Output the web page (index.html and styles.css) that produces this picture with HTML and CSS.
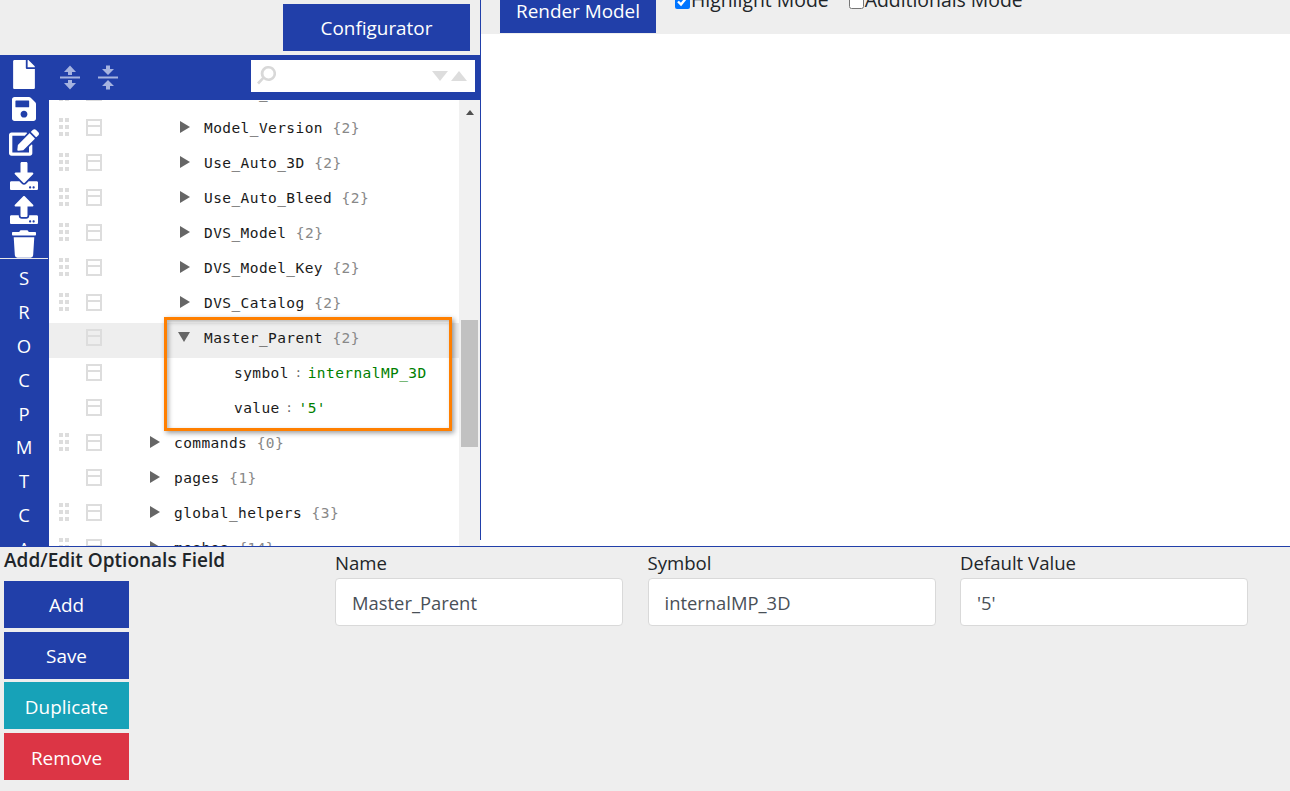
FILE: index.html
```html
<!DOCTYPE html>
<html lang="en">
<head>
<meta charset="utf-8">
<title>Configurator</title>
<link rel="stylesheet" href="styles.css">
</head>
<body>
<svg class="defs" width="0" height="0" aria-hidden="true">
  <symbol id="grip" viewBox="0 0 10 18"><path d="M0 0h4v4H0zM6 0h4v4H6zM0 7h4v4H0zM6 7h4v4H6zM0 14h4v4H0zM6 14h4v4H6z"/></symbol>
  <symbol id="box" viewBox="0 0 16 17"><path fill-rule="evenodd" d="M0 0h16v17H0zM2 2v4h12V2zM2 8v7h12V8z"/></symbol>
  <symbol id="tri" viewBox="0 0 10 12"><path d="M0 0l10 6-10 6z"/></symbol>
</svg>
<main class="page">
  <section class="workspace">
    <div class="left">
      <div class="left-top"><button class="btn btn-config">Configurator</button></div>
      <div class="editor">
        <nav class="rail">
          <div class="rail-icons">
            <span class="rail-item"><svg class="i-file" viewBox="0 0 384 512"><path d="M224 136V0H24C10.700 0 0 10.700 0 24v464c0 13.300 10.700 24 24 24h336c13.300 0 24-10.700 24-24V160H248c-13.200 0-24-10.800-24-24zm160-14.100v6.100H256V0h6.100c6.400 0 12.500 2.500 17 7l97.900 98c4.500 4.500 7 10.600 7 16.900z"/></svg></span>
            <span class="rail-item"><svg class="i-save" viewBox="0 0 448 512"><path d="M433.941 129.941l-83.882-83.882A48 48 0 0 0 316.118 32H48C21.490 32 0 53.490 0 80v352c0 26.510 21.490 48 48 48h352c26.510 0 48-21.490 48-48V163.882a48 48 0 0 0-14.059-33.941zM224 416c-35.346 0-64-28.654-64-64 0-35.346 28.654-64 64-64s64 28.654 64 64c0 35.346-28.654 64-64 64zm96-304.520V212c0 6.627-5.373 12-12 12H76c-6.627 0-12-5.373-12-12V108c0-6.627 5.373-12 12-12h228.520c3.183 0 6.235 1.264 8.485 3.515l3.480 3.480A11.996 11.996 0 0 1 320 111.480z"/></svg></span>
            <span class="rail-item"><svg class="i-edit" viewBox="0 0 576 512"><path d="M402.600 83.200l90.200 90.200c3.800 3.800 3.800 10 0 13.800L274.400 405.600l-92.800 10.300c-12.400 1.400-22.900-9.100-21.500-21.500l10.300-92.800L388.800 83.200c3.800-3.800 10-3.800 13.800 0zm162-22.900l-48.800-48.800c-15.200-15.200-39.900-15.200-55.200 0l-35.400 35.400c-3.800 3.800-3.800 10 0 13.800l90.200 90.200c3.800 3.800 10 3.800 13.800 0l35.400-35.400c15.200-15.300 15.200-40 0-55.200zM384 346.200V448H64V128h229.800c3.200 0 6.200-1.300 8.500-3.500l40-40c7.600-7.600 2.200-20.500-8.500-20.500H48C21.500 64 0 85.500 0 112v352c0 26.500 21.500 48 48 48h352c26.500 0 48-21.500 48-48V306.200c0-10.700-12.900-16-20.500-8.500l-40 40c-2.200 2.300-3.500 5.300-3.500 8.500z"/></svg></span>
            <span class="rail-item"><svg class="i-load" viewBox="0 0 512 512"><path d="M216 0h80c13.300 0 24 10.700 24 24v168h87.700c17.800 0 26.700 21.500 14.100 34.100L269.700 378.300c-7.500 7.500-19.800 7.500-27.300 0L90.100 226.100c-12.600-12.600-3.700-34.100 14.100-34.100H192V24c0-13.300 10.700-24 24-24zm296 376v112c0 13.300-10.700 24-24 24H24c-13.300 0-24-10.700-24-24V376c0-13.300 10.700-24 24-24h146.700l49 49c20.100 20.100 52.500 20.100 72.600 0l49-49H488c13.300 0 24 10.700 24 24zm-124 88c0-11-9-20-20-20s-20 9-20 20 9 20 20 20 20-9 20-20zm64 0c0-11-9-20-20-20s-20 9-20 20 9 20 20 20 20-9 20-20z"/></svg></span>
            <span class="rail-item"><svg class="i-load" viewBox="0 0 512 512"><path d="M296 384h-80c-13.300 0-24-10.700-24-24V192h-87.700c-17.800 0-26.700-21.500-14.100-34.100L242.300 5.700c7.500-7.500 19.800-7.500 27.300 0l152.200 152.200c12.600 12.600 3.700 34.100-14.100 34.100H320v168c0 13.300-10.700 24-24 24zm216-8v112c0 13.300-10.700 24-24 24H24c-13.300 0-24-10.700-24-24V376c0-13.300 10.700-24 24-24h136v8c0 30.900 25.100 56 56 56h80c30.900 0 56-25.100 56-56v-8h136c13.300 0 24 10.700 24 24zm-124 88c0-11-9-20-20-20s-20 9-20 20 9 20 20 20 20-9 20-20zm64 0c0-11-9-20-20-20s-20 9-20 20 9 20 20 20 20-9 20-20z"/></svg></span>
            <span class="rail-item"><svg class="i-save" viewBox="0 0 448 512"><path d="M432 32H312l-9.400-18.700A24 24 0 0 0 281.100 0H166.800a23.720 23.720 0 0 0-21.400 13.300L136 32H16A16 16 0 0 0 0 48v32a16 16 0 0 0 16 16h416a16 16 0 0 0 16-16V48a16 16 0 0 0-16-16zM53.200 467a48 48 0 0 0 47.900 45h245.800a48 48 0 0 0 47.900-45L416 128H32z"/></svg></span>
          </div>
          <div class="rail-letters">
            <span class="rail-item">S</span><span class="rail-item">R</span><span class="rail-item">O</span><span class="rail-item">C</span><span class="rail-item">P</span><span class="rail-item">M</span><span class="rail-item">T</span><span class="rail-item">C</span><span class="rail-item">A</span>
          </div>
        </nav>
        <div class="panel">
          <div class="toolbar">
            <svg class="tool" viewBox="0 0 20 24"><path d="M0 11h20v2H0zM10 0l6 6.500H12v3H8v-3H4zM10 24l-6-6.500H8v-3h4v3h4z"/></svg>
            <svg class="tool" viewBox="0 0 20 24"><path d="M0 11h20v2H0zM10 9.500l-6-6h4V0h4v3.500h4zM10 14.500l6 6h-4V24H8v-3.500H4z"/></svg>
            <div class="search">
              <svg class="glass" viewBox="0 0 20 20"><path d="M12.500 0a7.500 7.500 0 1 1-4.700 13.300L3 18.500 1 16.500l5-4.900A7.500 7.500 0 0 1 12.500 0zm0 2.500a5 5 0 1 0 0 10 5 5 0 0 0 0-10z"/></svg>
              <span class="arrow arrow-down"></span>
              <span class="arrow arrow-up"></span>
            </div>
          </div>
          <div class="tree-wrap">
            <div class="tree">
              <ul class="rows">
                <li class="row"><svg class="grip"><use href="#grip"/></svg><svg class="box"><use href="#box"/></svg><div class="node l2"><svg class="tri"><use href="#tri"/></svg><span class="key">Master_Version</span><span class="count">{2}</span></div></li>
                <li class="row"><svg class="grip"><use href="#grip"/></svg><svg class="box"><use href="#box"/></svg><div class="node l2"><svg class="tri"><use href="#tri"/></svg><span class="key">Model_Version</span><span class="count">{2}</span></div></li>
                <li class="row"><svg class="grip"><use href="#grip"/></svg><svg class="box"><use href="#box"/></svg><div class="node l2"><svg class="tri"><use href="#tri"/></svg><span class="key">Use_Auto_3D</span><span class="count">{2}</span></div></li>
                <li class="row"><svg class="grip"><use href="#grip"/></svg><svg class="box"><use href="#box"/></svg><div class="node l2"><svg class="tri"><use href="#tri"/></svg><span class="key">Use_Auto_Bleed</span><span class="count">{2}</span></div></li>
                <li class="row"><svg class="grip"><use href="#grip"/></svg><svg class="box"><use href="#box"/></svg><div class="node l2"><svg class="tri"><use href="#tri"/></svg><span class="key">DVS_Model</span><span class="count">{2}</span></div></li>
                <li class="row"><svg class="grip"><use href="#grip"/></svg><svg class="box"><use href="#box"/></svg><div class="node l2"><svg class="tri"><use href="#tri"/></svg><span class="key">DVS_Model_Key</span><span class="count">{2}</span></div></li>
                <li class="row"><svg class="grip"><use href="#grip"/></svg><svg class="box"><use href="#box"/></svg><div class="node l2"><svg class="tri"><use href="#tri"/></svg><span class="key">DVS_Catalog</span><span class="count">{2}</span></div></li>
                <li class="row row-active"><span class="grip"></span><svg class="box"><use href="#box"/></svg><div class="node l2"><svg class="tri tri-open"><use href="#tri"/></svg><span class="key">Master_Parent</span><span class="count">{2}</span></div></li>
                <li class="row"><span class="grip"></span><svg class="box"><use href="#box"/></svg><div class="node l3"><span class="key">symbol</span><span class="colon">:</span><span class="val">internalMP_3D</span></div></li>
                <li class="row"><span class="grip"></span><svg class="box"><use href="#box"/></svg><div class="node l3"><span class="key">value</span><span class="colon">:</span><span class="val">'5'</span></div></li>
                <li class="row"><svg class="grip"><use href="#grip"/></svg><svg class="box"><use href="#box"/></svg><div class="node l1"><svg class="tri"><use href="#tri"/></svg><span class="key">commands</span><span class="count">{0}</span></div></li>
                <li class="row"><span class="grip"></span><svg class="box"><use href="#box"/></svg><div class="node l1"><svg class="tri"><use href="#tri"/></svg><span class="key">pages</span><span class="count">{1}</span></div></li>
                <li class="row"><svg class="grip"><use href="#grip"/></svg><svg class="box"><use href="#box"/></svg><div class="node l1"><svg class="tri"><use href="#tri"/></svg><span class="key">global_helpers</span><span class="count">{3}</span></div></li>
                <li class="row"><svg class="grip"><use href="#grip"/></svg><svg class="box"><use href="#box"/></svg><div class="node l1"><svg class="tri"><use href="#tri"/></svg><span class="key">meshes</span><span class="count">{14}</span></div></li>
              </ul>
            </div>
            <div class="scrollbar"><span class="scroll-up"></span><span class="scroll-thumb"></span></div>
          </div>
        </div>
        <div class="callout"></div>
      </div>
    </div>
    <div class="vline"></div>
    <div class="right">
      <div class="right-bar">
        <button class="btn btn-render">Render Model</button>
        <label class="check check-a"><input type="checkbox" checked>Highlight Mode</label>
        <label class="check check-b"><input type="checkbox">Additionals Mode</label>
      </div>
    </div>
  </section>
  <section class="bottom">
    <div class="actions">
      <h2 class="title">Add/Edit Optionals Field</h2>
      <button class="btn btn-act btn-a">Add</button>
      <button class="btn btn-act btn-b">Save</button>
      <button class="btn btn-act btn-c btn-teal">Duplicate</button>
      <button class="btn btn-act btn-d btn-red">Remove</button>
    </div>
    <div class="fields">
      <label class="field"><span class="field-label">Name</span><input class="input" value="Master_Parent"></label>
      <label class="field"><span class="field-label">Symbol</span><input class="input" value="internalMP_3D"></label>
      <label class="field"><span class="field-label">Default Value</span><input class="input" value="'5'"></label>
    </div>
  </section>
</main>
</body>
</html>
```

FILE: styles.css
```css
* { box-sizing: border-box; }
html, body { margin: 0; padding: 0; height: 791px; overflow: hidden; }
body { background: #eee; font-family: "Open Sans", "Noto Sans", sans-serif; color: #212529; }
.defs { position: absolute; }
.page { display: flex; flex-direction: column; height: 791px; }
.workspace { display: flex; height: 547px; background: #fff; border-bottom: 1px solid #213fa9; }
.left { width: 480px; display: flex; flex-direction: column; position: relative; }
.left-top { height: 55px; background: #eee; display: flex; justify-content: flex-end; padding: 4px 10px 0 0; }
.btn { border: 0; background: #213fa9; color: #fff; font-family: inherit; font-size: 18.900px; padding: 0; display: block; }
.btn-config { width: 187px; height: 47px; padding-top: 1px; }
.editor { flex: 1; display: flex; min-height: 0; }
.rail { width: 49px; background: #213fa9; color: #fff; padding-top: 3px; overflow: hidden; flex: none; }
.rail-icons { height: 201px; border-bottom: 1px solid #e8e8e8; margin-right: 1px; }
.rail-icons .rail-item { height: 33.800px; }
.rail-letters { margin-top: 2px; margin-right: 1px; }
.rail-item { height: 33.800px; display: flex; align-items: center; justify-content: center; font-size: 18.500px; }
.rail-item svg { fill: #fff; display: block; }
.i-file { width: 22px; height: 29px; }
.i-save { width: 24px; height: 28px; }
.i-edit { width: 30px; height: 27px; }
.i-load { width: 28px; height: 28px; }
.panel { flex: 1; display: flex; flex-direction: column; min-width: 0; }
.toolbar { height: 45px; background: #213fa9; display: flex; align-items: center; padding-left: 11px; gap: 18px; }
.tool { width: 20px; height: 25px; fill: #a6b3e0; margin-top: -1px; }
.search { width: 224px; height: 32px; background: #fff; margin-left: 115px; margin-top: -3px; display: flex; align-items: center; padding: 0 8px 0 5px; }
.glass { width: 20px; height: 20px; fill: #d8d8d8; margin-right: auto; }
.arrow { width: 0; height: 0; border-left: 8.500px solid transparent; border-right: 8.500px solid transparent; }
.arrow-down { border-top: 10px solid #ddd; margin-right: 3px; }
.arrow-up { border-bottom: 10px solid #ddd; }
.tree-wrap { flex: 1; display: flex; min-height: 0; }
.tree { flex: 1; overflow: hidden; min-width: 0; }
.rows { list-style: none; margin: -22px 0 0; padding: 0; }
.row { height: 35px; display: flex; align-items: center; padding: 0 0 6px 10px; }
.row-active { background: #eee; }
.grip { width: 10px; height: 18px; fill: #ddd; flex: none; display: block; margin-top: -1px; }
.box { width: 16px; height: 17px; fill: #ddd; flex: none; margin-left: 17px; }
.node { display: flex; align-items: center; font-family: "DejaVu Sans Mono", monospace; font-size: 14.500px; letter-spacing: .42px; color: #1a1a1a; white-space: pre; }
.l1 { margin-left: 48px; }
.l2 { margin-left: 78px; }
.l3 { margin-left: 132px; }
.tri { width: 10px; height: 12px; fill: #666; margin-right: 14px; margin-top: -1px; flex: none; }
.tri-open { transform: rotate(90deg); margin-left: -1px; margin-right: 15px; }
.count { color: #888; margin-left: 9.500px; }
.colon { width: 18.800px; text-align: center; color: #666; font-size: 12px; letter-spacing: 0; }
.val { color: #008000; }
.scrollbar { width: 21px; background: #f1f1f1; flex: none; display: flex; flex-direction: column; align-items: center; }
.scroll-up { width: 0; height: 0; border-left: 4.500px solid transparent; border-right: 4.500px solid transparent; border-bottom: 5px solid #505050; margin-top: 10px; }
.scroll-thumb { width: 17px; height: 127px; background: #c1c1c1; margin-top: 205px; }
.callout { position: absolute; left: 164px; top: 317px; width: 288px; height: 114px; border: 3px solid #ff7f00; box-shadow: 2px 2px 5px rgba(0,0,0,.4), inset 2px 2px 4px rgba(0,0,0,.3); }
.vline { width: 1px; height: 540px; background: #213fa9; flex: none; }
.right { flex: 1; min-width: 0; }
.right-bar { height: 34px; background: #eee; display: flex; align-items: flex-end; padding-left: 19px; overflow: hidden; }
.btn-render { width: 156px; height: 47px; flex: none; margin-bottom: 1px; padding-top: 3px; }
.check { display: flex; align-items: center; font-size: 19.400px; line-height: 24px; white-space: nowrap; align-self: flex-start; margin-top: -12px; }
.check input { width: 15px; height: 15px; margin: 2px 1px 0 0; }
.check-a { margin-left: 19px; }
.check-b { margin-left: 20px; }
.bottom { flex: 1; display: flex; background: #eee; }
.actions { width: 335px; padding-left: 4px; flex: none; }
.title { font-size: 19px; font-weight: 600; margin: 0; height: 34px; line-height: 26px; color: #212529; }
.btn-act { width: 125px; height: 47px; }
.btn-a { margin-bottom: 4px; }
.btn-b { margin-bottom: 3px; }
.btn-c { margin-bottom: 4px; padding-top: 2px; }
.btn-d { padding-top: 2px; }
.btn-teal { background: #17a2b8; }
.btn-red { background: #dc3545; }
.fields { display: grid; grid-template-columns: repeat(3, 288px); column-gap: 24.500px; align-content: start; padding-top: 3px; }
.field { display: block; }
.field-label { display: block; font-size: 18.600px; line-height: 26px; margin-bottom: 2px; }
.input { width: 100%; height: 48px; border: 1px solid #d9d9d9; border-radius: 4px; background: #fff; padding: 0 16px; font-family: inherit; font-size: 18.400px; color: #495057; outline: 0; }
```
